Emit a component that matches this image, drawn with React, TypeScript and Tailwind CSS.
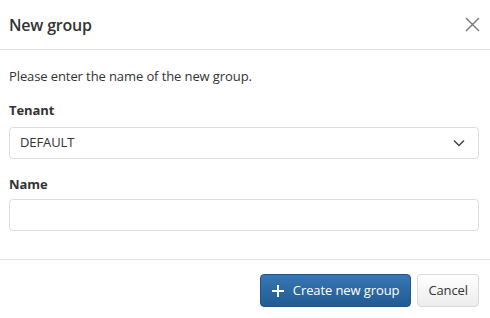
import React from 'react';

const font = { fontFamily: '"Open Sans", "Noto Sans", sans-serif' };

const CloseIcon = () => (
    <svg width="15" height="15" viewBox="0 0 15 15" fill="none" stroke="#777" strokeWidth="1.4">
        <path d="M1 1 L14 14 M14 1 L1 14" />
    </svg>
);

const Chevron = () => (
    <svg width="12" height="8" viewBox="0 0 12 8" fill="none" stroke="#444" strokeWidth="1.5">
        <path d="M1 1.5 L6 6.5 L11 1.5" />
    </svg>
);

const Plus = () => (
    <svg width="12" height="12" viewBox="0 0 12 12" fill="none" stroke="#fff" strokeWidth="2">
        <path d="M6 0 V12 M0 6 H12" />
    </svg>
);

export default function App() {
    return (
        <div className="w-[490px] h-[318px] bg-white text-[#333] flex flex-col tracking-[-0.1px]" style={font}>
            <div className="h-[50px] shrink-0 flex items-center justify-between pl-[9px] pr-[10px] border-b border-[#e3e3e6]">
                <h1 className="text-[16px] font-semibold text-[#333] tracking-[-0.2px]">New group</h1>
                <button className="p-0">
                    <CloseIcon />
                </button>
            </div>
            <div className="flex-1 pl-[9px] pr-[11px] pt-[16px] text-[13px]">
                <p className="leading-[20px]">Please enter the name of the new group.</p>
                <label className="block font-bold mt-[14px] leading-[20px]">Tenant</label>
                <div className="mt-[7px] h-[32px] rounded-[4px] border border-[#dcdcdf] flex items-center justify-between pl-[10px] pr-[13px]">
                    <span>DEFAULT</span>
                    <Chevron />
                </div>
                <label className="block font-bold mt-[15px] leading-[20px]">Name</label>
                <input
                    className="mt-[5px] w-full h-[32px] rounded-[4px] border border-[#dcdcdf] outline-none px-[10px]"
                    type="text"
                />
            </div>
            <div className="h-[59px] shrink-0 border-t border-[#e3e3e6] flex justify-end items-start gap-[6px] pt-[14px] pr-[11px] text-[13px]">
                <button className="h-[33px] px-[11px] rounded-[4px] border border-[#1f5488] bg-gradient-to-b from-[#3877b5] to-[#215b93] text-white flex items-center gap-[9px]">
                    <Plus />
                    Create new group
                </button>
                <button className="h-[33px] px-[10px] rounded-[4px] border border-[#dadada] bg-gradient-to-b from-white to-[#ececec] text-[#333]">
                    Cancel
                </button>
            </div>
        </div>
    );
}
